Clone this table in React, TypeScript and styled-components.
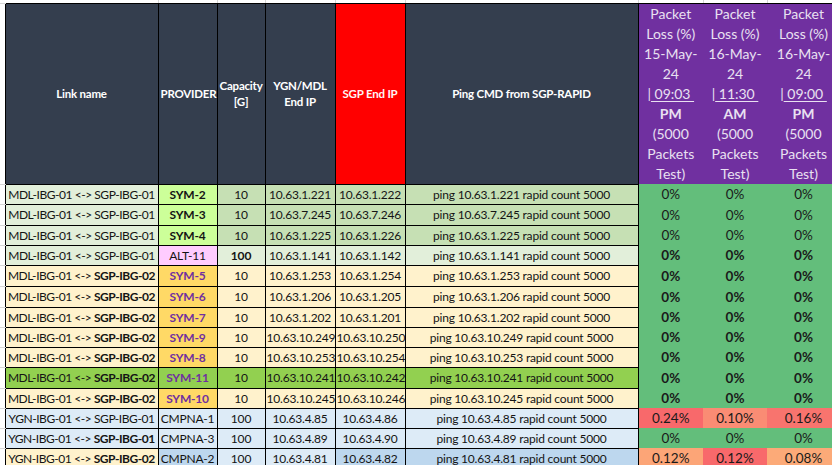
import React from "react";
import styled, { createGlobalStyle } from "styled-components";

const Global = createGlobalStyle`
  html, body { margin: 0; padding: 0; background: #ffffff; }
  body { font-family: Lato, "Open Sans", sans-serif; overflow: hidden; }
`;

const Sheet = styled.table`
  border-collapse: collapse;
  table-layout: fixed;
  width: 840px;
  font-family: Lato, "Open Sans", sans-serif;
  color: #111;
`;

const StripCell = styled.td`
  height: 3px;
  padding: 0;
  border-right: 1px solid #d6d6d6;
  border-bottom: 1px solid #000;
`;

const Gutter = styled.td`
  padding: 0;
  border-bottom: 1px solid #d6d6d6;
  border-right: none;
`;

const Head = styled.th<{ $bg?: string; $color?: string }>`
  height: 179px;
  padding: 0 2px;
  background: ${(p) => p.$bg || "#343e4e"};
  color: ${(p) => p.$color || "#ffffff"};
  font-size: 11.5px;
  letter-spacing: -0.2px;
  line-height: 16px;
  font-weight: 700;
  text-align: center;
  vertical-align: middle;
  border: 1px solid #000;
`;

const LossHead = styled.th`
  padding: 0;
  background: #7030a0;
  color: #e9e0f1;
  font-size: 14px;
  font-weight: 400;
  line-height: 20px;
  text-align: center;
  vertical-align: top;
  border: none;
  border-top: 1px solid #000;
`;

const Line = styled.span<{ $bold?: boolean }>`
  display: block;
  font-weight: ${(p) => (p.$bold ? 700 : 400)};
  white-space: pre;
`;

const Under = styled.span`
  text-decoration: underline;
  text-underline-offset: 2px;
`;

const Row = styled.tr<{ $h: number }>`
  height: ${(p) => p.$h}px;
`;

const Cell = styled.td<{ $bg: string; $bold?: boolean; $color?: string; $tight?: boolean }>`
  padding: 0 1px;
  background: ${(p) => p.$bg};
  color: ${(p) => p.$color || "#141414"};
  font-weight: ${(p) => (p.$bold ? 700 : 400)};
  font-size: 12px;
  letter-spacing: ${(p) => (p.$tight ? "-0.45px" : "-0.2px")};
  text-align: center;
  vertical-align: middle;
  white-space: nowrap;
  overflow: hidden;
  border: 1px solid #000;
`;

const LossCell = styled.td<{ $bg: string; $bold?: boolean }>`
  padding: 0;
  background: ${(p) => p.$bg};
  color: #1a1a1a;
  font-weight: ${(p) => (p.$bold ? 700 : 400)};
  font-size: 13.5px;
  text-align: center;
  vertical-align: middle;
  white-space: nowrap;
  border: none;
`;

const Strong = styled.b`
  font-weight: 700;
`;

type R = {
  a: string;
  b: string;
  bBold?: boolean;
  linkBg: string;
  prov: string;
  provBg: string;
  provColor?: string;
  provBold?: boolean;
  cap: string;
  capBold?: boolean;
  capBg: string;
  ygn: string;
  ygnBg: string;
  sgp: string;
  sgpBg: string;
  pingBg: string;
  loss: [string, string, string];
  lossBg: [string, string, string];
  lossBold?: boolean;
  h: number;
};

const G = "#63be7b";
const LG = "#e2efda";
const MG = "#c6e0b4";
const Y = "#fff2cc";
const GOLD = "#ffd966";
const PUR = "#7030a0";
const LB = "#ddebf7";
const MB = "#bdd7ee";
const BG = "#92d050";

const sym = (
  prov: string,
  ygn: string,
  sgp: string,
  h: number,
  bg: string = Y,
  provBg: string = GOLD
): R => ({
  a: "MDL-IBG-01 <-> ",
  b: "SGP-IBG-02",
  bBold: true,
  linkBg: bg,
  prov,
  provBg,
  provColor: PUR,
  provBold: true,
  cap: "10",
  capBg: bg,
  ygn,
  ygnBg: bg,
  sgp,
  sgpBg: bg,
  pingBg: bg,
  loss: ["0%", "0%", "0%"],
  lossBg: [G, G, G],
  lossBold: true,
  h,
});

const green = (prov: string, ygn: string, sgp: string, h: number): R => ({
  a: "MDL-IBG-01 <-> ",
  b: "SGP-IBG-01",
  linkBg: LG,
  prov,
  provBg: "#ccff99",
  provBold: true,
  cap: "10",
  capBg: MG,
  ygn,
  ygnBg: MG,
  sgp,
  sgpBg: MG,
  pingBg: MG,
  loss: ["0%", "0%", "0%"],
  lossBg: [G, G, G],
  h,
});

const rows: R[] = [
  green("SYM-2", "10.63.1.221", "10.63.1.222", 20),
  green("SYM-3", "10.63.7.245", "10.63.7.246", 21),
  green("SYM-4", "10.63.1.225", "10.63.1.226", 20),
  {
    a: "MDL-IBG-01 <-> ",
    b: "SGP-IBG-01",
    linkBg: LG,
    prov: "ALT-11",
    provBg: "#ffccff",
    cap: "100",
    capBold: true,
    capBg: LG,
    ygn: "10.63.1.141",
    ygnBg: LG,
    sgp: "10.63.1.142",
    sgpBg: LG,
    pingBg: LG,
    loss: ["0%", "0%", "0%"],
    lossBg: [G, G, G],
    lossBold: true,
    h: 20,
  },
  sym("SYM-5", "10.63.1.253", "10.63.1.254", 21),
  sym("SYM-6", "10.63.1.206", "10.63.1.205", 21),
  sym("SYM-7", "10.63.1.202", "10.63.1.201", 20),
  sym("SYM-9", "10.63.10.249", "10.63.10.250", 20),
  sym("SYM-8", "10.63.10.253", "10.63.10.254", 20),
  sym("SYM-11", "10.63.10.241", "10.63.10.242", 21, BG, BG),
  sym("SYM-10", "10.63.10.245", "10.63.10.246", 20),
  {
    a: "YGN-IBG-01 <-> ",
    b: "SGP-IBG-01",
    linkBg: LB,
    prov: "CMPNA-1",
    provBg: LB,
    cap: "100",
    capBg: LB,
    ygn: "10.63.4.85",
    ygnBg: LB,
    sgp: "10.63.4.86",
    sgpBg: LB,
    pingBg: LB,
    loss: ["0.24%", "0.10%", "0.16%"],
    lossBg: ["#f8696b", "#fa8c74", "#f8746e"],
    h: 20,
  },
  {
    a: "YGN-IBG-01 <-> ",
    b: "SGP-IBG-01",
    bBold: true,
    linkBg: LB,
    prov: "CMPNA-3",
    provBg: LB,
    cap: "100",
    capBg: LB,
    ygn: "10.63.4.89",
    ygnBg: LB,
    sgp: "10.63.4.90",
    sgpBg: LB,
    pingBg: LB,
    loss: ["0%", "0%", "0%"],
    lossBg: [G, G, G],
    h: 20,
  },
  {
    a: "YGN-IBG-01 <-> ",
    b: "SGP-IBG-02",
    bBold: true,
    linkBg: Y,
    prov: "CMPNA-2",
    provBg: MB,
    cap: "100",
    capBg: LB,
    ygn: "10.63.4.81",
    ygnBg: LB,
    sgp: "10.63.4.82",
    sgpBg: MB,
    pingBg: MB,
    loss: ["0.12%", "0.12%", "0.08%"],
    lossBg: ["#fca577", "#f8696b", "#fcaa78"],
    h: 20,
  },
];

const lossHeads = [
  { date: "15-May-", time: " 09:03 ", ampm: "PM" },
  { date: "16-May-", time: " 11:30 ", ampm: "AM" },
  { date: "16-May-", time: " 09:00 ", ampm: "PM" },
];

const widths = [5, 153, 59, 48, 70, 70, 233, 65, 64, 73];

export default function App() {
  return (
    <>
      <Global />
      <Sheet>
        <colgroup>
          {widths.map((w, i) => (
            <col key={i} style={{ width: w }} />
          ))}
        </colgroup>
        <thead>
          <tr>
            <Gutter />
            {widths.slice(1).map((_, i) => (
              <StripCell key={i} />
            ))}
          </tr>
          <tr>
            <Gutter />
            <Head>Link name</Head>
            <Head>PROVIDER</Head>
            <Head>
              Capacity
              <br />
              [G]
            </Head>
            <Head>
              YGN/MDL
              <br />
              End IP
            </Head>
            <Head $bg="#ff0000" $color="#fff4f4">
              SGP End IP
            </Head>
            <Head>Ping CMD from SGP-RAPID</Head>
            {lossHeads.map((h, i) => (
              <LossHead key={i}>
                <Line>Packet</Line>
                <Line>Loss (%)</Line>
                <Line>{h.date}</Line>
                <Line>24</Line>
                <Line>
                  |<Under>{h.time}</Under>
                </Line>
                <Line $bold>{h.ampm}</Line>
                <Line>(5000</Line>
                <Line>Packets</Line>
                <Line>Test)</Line>
              </LossHead>
            ))}
          </tr>
        </thead>
        <tbody>
          {rows.map((r, i) => (
            <Row key={i} $h={r.h}>
              <Gutter />
              <Cell $bg={r.linkBg} $tight>
                {r.a}
                {r.bBold ? <Strong>{r.b}</Strong> : r.b}
              </Cell>
              <Cell $bg={r.provBg} $color={r.provColor} $bold={r.provBold}>
                {r.prov}
              </Cell>
              <Cell $bg={r.capBg} $bold={r.capBold}>
                {r.cap}
              </Cell>
              <Cell $bg={r.ygnBg}>{r.ygn}</Cell>
              <Cell $bg={r.sgpBg}>{r.sgp}</Cell>
              <Cell $bg={r.pingBg}>ping {r.ygn} rapid count 5000</Cell>
              {r.loss.map((l, j) => (
                <LossCell key={j} $bg={r.lossBg[j]} $bold={r.lossBold}>
                  {l}
                </LossCell>
              ))}
            </Row>
          ))}
        </tbody>
      </Sheet>
    </>
  );
}
